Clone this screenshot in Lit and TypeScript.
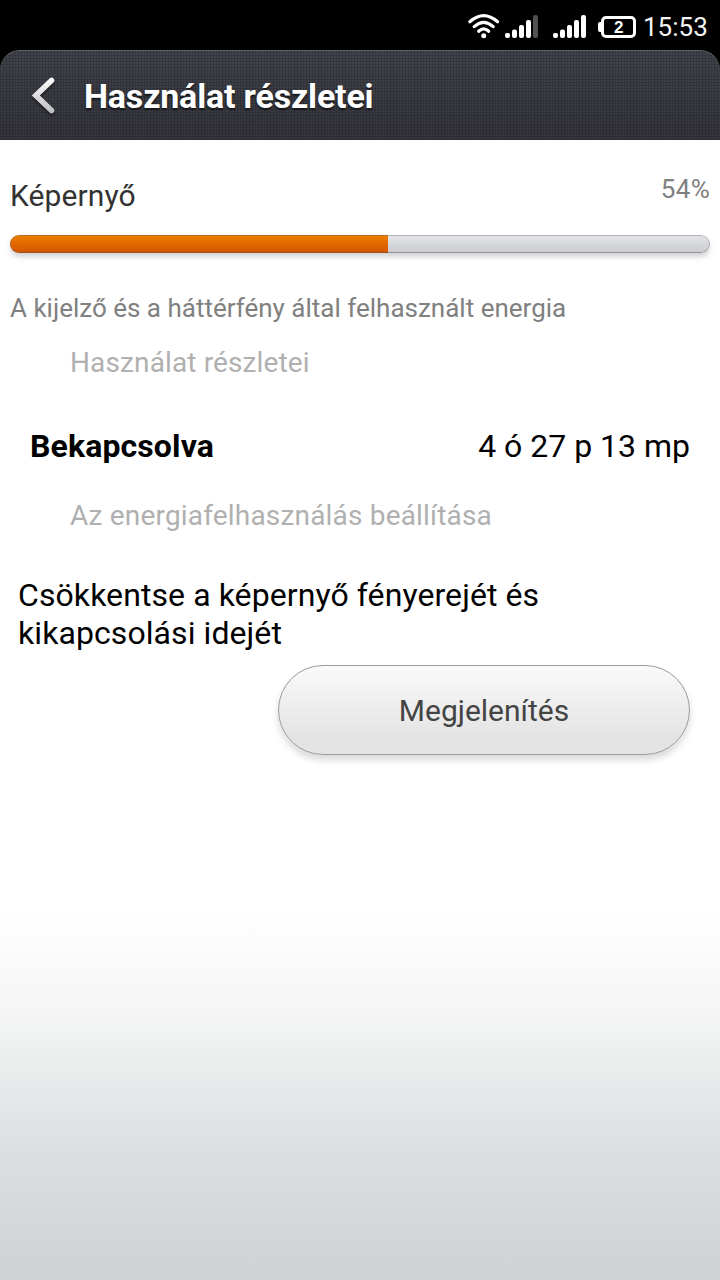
import { LitElement, html, svg, css } from "lit";
import { customElement, property } from "lit/decorators.js";

@customElement("status-bar")
class StatusBar extends LitElement {
  static styles = css`
    :host { display: flex; height: 50px; background: #000; color: #fff; }
    svg { display: block; flex: none; }
    .icons { margin-left: 460px; }
    .two { font: bold 17px "Liberation Sans", sans-serif; }
    .clock { width: 65px; margin-left: 3px; line-height: 55px; font-size: 26px; white-space: nowrap; color: #f4f4f4; }
  `;
  private bars(x: number, dim: boolean) {
    return [33, 29.5, 25, 20, 15].map((y, i) => svg`
      <rect x=${x + i * 7} y=${y} width="5" height=${38 - y} rx="2" fill=${dim && i === 4 ? "#505050" : "#fff"} />`);
  }
  render() {
    return html`
      <svg class="icons" width="180" height="50" viewBox="460 0 180 50">
        <g fill="none" stroke="#fff" stroke-width="3.2" stroke-linecap="round">
          <path d="M469.8 21.8Q483.7 9.6 497.6 21.8" />
          <path d="M474.2 26.6Q483.7 18.2 493.2 26.6" />
          <path d="M478.7 31.2Q483.7 26.6 488.7 31.2" />
        </g>
        <circle cx="483.7" cy="35.7" r="2.5" fill="#fff" />
        ${this.bars(505, true)} ${this.bars(553, false)}
        <rect x="602.5" y="17.5" width="32" height="19" rx="3.5" fill="none" stroke="#fff" stroke-width="3" />
        <path d="M602 22H600Q598 22 598 24V30Q598 32 600 32H602Z" fill="#fff" />
        <text class="two" x="618.8" y="33.2" text-anchor="middle" fill="#fff">2</text>
      </svg>
      <span class="clock">15:53</span>`;
  }
}

@customElement("title-bar")
class TitleBar extends LitElement {
  static styles = css`
    :host { display: block; background: #000; }
    .bar {
      display: flex; box-sizing: border-box; height: 90px; border-top: 1px solid #60626a; border-radius: 20px 20px 0 0;
      background:
        repeating-linear-gradient(90deg, rgba(0,0,0,.14) 0 1px, transparent 1px 3px),
        repeating-linear-gradient(0deg, rgba(0,0,0,.14) 0 1px, transparent 1px 3px),
        linear-gradient(#41434c, #34353b);
    }
    svg { display: block; flex: none; margin: 19px 0 0 24px; filter: drop-shadow(0 2px 1px rgba(0,0,0,.5)); }
    h1 { margin: 0 0 0 20px; font-size: 34px; line-height: 91px; font-weight: 700; color: #fff; white-space: nowrap; letter-spacing: -0.18px; text-shadow: 0 2px 2px rgba(0,0,0,.6); }
  `;
  render() {
    return html`<div class="bar">
      <svg width="40" height="52" viewBox="24 70 40 52">
        <defs><linearGradient id="g" gradientUnits="userSpaceOnUse" x1="0" y1="78" x2="0" y2="113"><stop offset="0" stop-color="#fff" /><stop offset="1" stop-color="#bcbdc0" /></linearGradient></defs>
        <path d="M51.5 80.5L35.8 95.5L51.5 110.5" fill="none" stroke="url(#g)" stroke-width="5.6" stroke-linecap="round" stroke-linejoin="miter" />
      </svg>
      <h1>Használat részletei</h1></div>`;
  }
}

@customElement("usage-meter")
class UsageMeter extends LitElement {
  @property({ type: Number }) value = 0;
  static styles = css`
    .track { box-sizing: border-box; height: 18px; border-radius: 9px; overflow: hidden; background: linear-gradient(#e4e6ea, #c8cace); position: relative; }
    :host { display: block; border-radius: 9px; box-shadow: 0 4px 5px rgba(0,0,0,.17); }
    .fill { height: 18px; background: linear-gradient(#ee7f00, #d45200); }
    .track::after { content: ""; position: absolute; inset: 0; border-radius: 9px; border: 1px solid rgba(90,90,95,.35); border-bottom-color: rgba(80,80,85,.45); }
  `;
  render() {
    return html`<div class="track"><div class="fill" style="width:${this.value}%"></div></div>`;
  }
}

@customElement("app-root")
class AppRoot extends LitElement {
  static styles = css`
    :host { display: flex; flex-direction: column; width: 720px; height: 1280px; overflow: hidden; font-family: Roboto, "Noto Sans", sans-serif; }
    main { flex: 1; background: linear-gradient(#fff 0, #fff 770px, #f7f7f7 855px, #f0f3f1 895px, #ebedec 925px, #e7e8ea 950px, #dddee0 1010px, #d0d1d3 1140px); white-space: nowrap; }
    .row { display: flex; justify-content: space-between; }
    .top { padding: 30px 10px 0; height: 65px; }
    .name { font-size: 30px; line-height: 52px; color: #333; letter-spacing: 0.1px; }
    .pct { font-size: 26px; line-height: 39px; color: #808080; letter-spacing: 0.3px; }
    usage-meter { margin: 0 10px; }
    .desc { margin: 39px 10px 0; font-size: 26px; line-height: 32px; color: #808080; }
    .section { margin: 20px 70px 0; font-size: 28px; line-height: 38px; color: #b0b0b0; letter-spacing: 0.13px; }
    .stat { margin: 42px 30px 0; font-size: 32px; line-height: 44px; color: #000; }
    .stat b { letter-spacing: 0.12px; }
    .second { margin-top: 29px; letter-spacing: 0.18px; }
    .tip { margin: 41px 18px 0; font-size: 32px; line-height: 38px; color: #000; letter-spacing: 0.08px; }
    .action {
      display: block; box-sizing: border-box; width: 412px; height: 90px; margin: 13px 30px 0 278px; padding: 2px 0 0;
      border: 1px solid #9a9a9a; border-radius: 45px; background: linear-gradient(#fafafa, #e3e3e3 85%);
      box-shadow: 0 5px 7px rgba(0,0,0,.15); font: 30px/86px Roboto, sans-serif; color: #444;
    }
  `;
  render() {
    return html`
      <status-bar></status-bar>
      <title-bar></title-bar>
      <main>
        <div class="row top"><span class="name">Képernyő</span><span class="pct">54%</span></div>
        <usage-meter .value=${54}></usage-meter>
        <div class="desc">A kijelző és a háttérfény által felhasznált energia</div>
        <div class="section">Használat részletei</div>
        <div class="row stat"><b>Bekapcsolva</b><span class="time">4 ó 27 p 13 mp</span></div>
        <div class="section second">Az energiafelhasználás beállítása</div>
        <div class="tip">Csökkentse a képernyő fényerejét és<br />kikapcsolási idejét</div>
        <button class="action"><span>Megjelenítés</span></button>
      </main>`;
  }
}
